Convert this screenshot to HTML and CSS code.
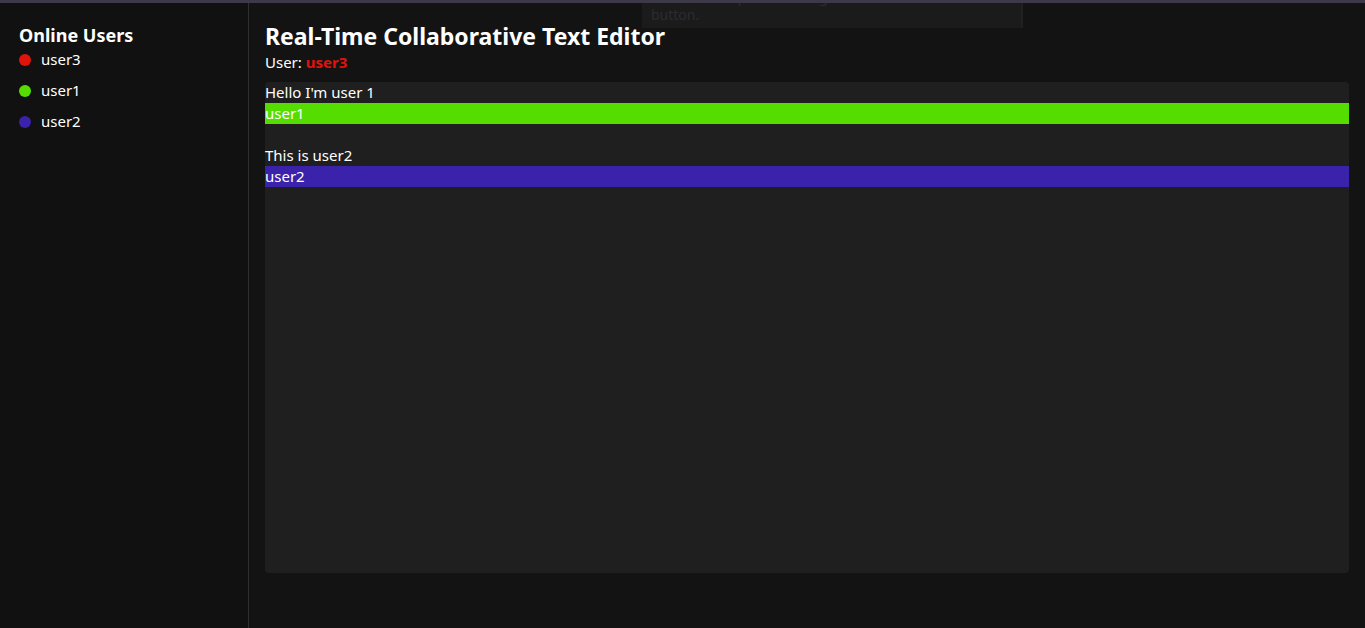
FILE: index.html
```html
<!DOCTYPE html>
<html lang="en">
<head>
<meta charset="utf-8">
<title>Real-Time Collaborative Text Editor</title>
<link rel="stylesheet" href="styles.css">
</head>
<body>
<div class="chrome-strip"></div>
<div class="snip-hint">
  <p>Select the snip mode using the Mode button or click the New</p>
  <p>button.</p>
</div>
<div class="layout">
  <aside class="sidebar">
    <h3 class="sidebar-title">Online Users</h3>
    <ul class="user-list">
      <li class="user-item"><span class="dot dot-red"></span>user3</li>
      <li class="user-item"><span class="dot dot-green"></span>user1</li>
      <li class="user-item"><span class="dot dot-purple"></span>user2</li>
    </ul>
  </aside>
  <main class="main">
    <h1 class="title">Real-Time Collaborative Text Editor</h1>
    <div class="current-user">User: <strong class="me">user3</strong></div>
    <div class="editor">
      <div class="line">Hello I'm user 1</div>
      <div class="line cursor-green">user1</div>
      <div class="line"><br></div>
      <div class="line">This is user2</div>
      <div class="line cursor-purple">user2</div>
    </div>
  </main>
</div>
</body>
</html>
```

FILE: styles.css
```css
* { box-sizing: border-box; }
html, body { margin: 0; padding: 0; }
body {
  background: #121212;
  color: #ffffff;
  font-family: "Noto Sans", "Open Sans", sans-serif;
  font-size: 16px;
  height: 628px;
  overflow: hidden;
  position: relative;
}
.chrome-strip {
  height: 3px;
  background: #3d3948;
  position: relative;
  z-index: 2;
}
.snip-hint {
  position: absolute;
  left: 642px;
  top: 0;
  width: 381px;
  height: 28px;
  background: #1b1b1b;
  border-right: 2px solid #202020;
  padding: 0 9px;
  overflow: hidden;
  color: #2c2b30;
  font-size: 14px;
  line-height: 18px;
  white-space: nowrap;
  z-index: 1;
}
.snip-hint p { margin: 0; position: relative; top: -12px; }
.layout {
  display: flex;
  height: 625px;
}
.sidebar {
  width: 249px;
  flex: none;
  border-right: 1px solid #2f2f2f;
  background: #111111;
  padding: 24px 19px;
}
.sidebar-title {
  margin: 0;
  font-size: 18px;
  font-weight: 700;
  line-height: 17px;
}
.user-list {
  list-style: none;
  margin: 0;
  padding: 0;
}
.user-item {
  display: flex;
  align-items: center;
  gap: 10px;
  padding: 5px 0;
  line-height: 21px;
  font-size: 15px;
}
.dot {
  width: 12px;
  height: 12px;
  border-radius: 50%;
  flex: none;
}
.dot-red { background: #e0140a; }
.dot-green { background: #55dd00; }
.dot-purple { background: #3a23aa; }
.main {
  flex: 1;
  padding: 17px 16px 16px;
  background: #131313;
}
.title {
  margin: 0;
  font-size: 23px;
  font-weight: 700;
  line-height: 32px;
}
.current-user {
  font-size: 15px;
  line-height: 21px;
  margin-bottom: 9px;
}
.me { color: #e0140a; font-weight: 700; }
.editor {
  background: #1f1f1f;
  border-radius: 4px;
  height: 491px;
  font-size: 15px;
  line-height: 21px;
}
.line { white-space: pre; }
.cursor-green { background: #55dd00; }
.cursor-purple { background: #3a23aa; }
```
